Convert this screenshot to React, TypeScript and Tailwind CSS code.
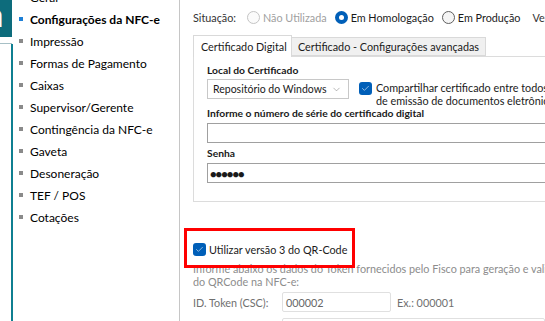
import { Check, ChevronDown } from 'lucide-react';

const menu = [
  'Geral',
  'Configurações da NFC-e',
  'Impressão',
  'Formas de Pagamento',
  'Caixas',
  'Supervisor/Gerente',
  'Contingência da NFC-e',
  'Gaveta',
  'Desoneração',
  'TEF / POS',
  'Cotações',
];

function Radio({ label, state }: { label: string; state: 'off' | 'on' | 'disabled' }) {
  return (
    <div className="flex items-center gap-[3px]">
      {state === 'on' ? (
        <span className="w-[13px] h-[13px] rounded-full bg-[#005fb8] flex items-center justify-center">
          <span className="w-[5px] h-[5px] rounded-full bg-white" />
        </span>
      ) : (
        <span
          className={
            state === 'disabled'
              ? 'w-[13px] h-[13px] rounded-full border border-[#c4c4c4] bg-[#fbfbfb]'
              : 'w-[13px] h-[13px] rounded-full border border-[#5f5f5f] bg-[#f5f5f5]'
          }
        />
      )}
      <span className={state === 'disabled' ? 'text-[#a0a0a0]' : 'text-[#1a1a1a]'}>{label}</span>
    </div>
  );
}

function Checkbox() {
  return (
    <span className="w-[13px] h-[13px] rounded-[3px] bg-[#005fb8] flex items-center justify-center shrink-0">
      <Check size={9} strokeWidth={1.5} color="#ffffff" />
    </span>
  );
}

export default function App() {
  return (
    <div
      className="relative w-[545px] h-[321px] overflow-hidden bg-white flex text-[12px] leading-[15px] text-[#1a1a1a]"
      style={{ fontFamily: 'Lato, "Noto Sans", sans-serif' }}
    >
      {/* logo strip */}
      <div className="w-[13px] flex flex-col shrink-0">
        <div className="h-[37px] w-[12px] bg-[#0d6c7c] overflow-hidden shrink-0">
          <span className="block -ml-[14px] -mt-[6px] text-[34px] leading-[40px] font-bold text-white">a</span>
        </div>
        <div className="h-[6px] shrink-0" />
        <div className="h-px w-[12px] bg-[#a7c0c6] shrink-0" />
        <div className="flex-1 border-r-2 border-[#0f7f91] w-[13px]" />
      </div>

      {/* menu */}
      <div className="w-[167px] shrink-0 border-r border-[#c6c6c6]">
        <ul className="-mt-[14px]">
          {menu.map((item, i) => (
            <li key={item} className="h-[22px] flex items-center pl-[6px] gap-[7px] whitespace-nowrap">
              <span className={i === 1 ? 'w-[4px] h-[4px] bg-[#1d7fd6]' : 'w-[4px] h-[4px] bg-[#8a8a8a]'} />
              <span className={i === 1 ? 'font-bold text-black' : 'text-black'}>{item}</span>
            </li>
          ))}
        </ul>
      </div>

      {/* content */}
      <div className="flex-1 pl-[13px] flex flex-col min-w-0 text-[10.8px] leading-[13px] [&>*]:shrink-0">
        <div className="mt-[7px] h-[20px] flex items-center whitespace-nowrap">
          <span className="text-[#333] mr-[11px]">Situação:</span>
          <div className="flex items-center gap-[8px]">
            <Radio label="Não Utilizada" state="disabled" />
            <Radio label="Em Homologação" state="on" />
            <Radio label="Em Produção" state="off" />
            <span className="ml-[4px] text-[#333]">Versão</span>
          </div>
        </div>

        {/* tabs */}
        <div className="mt-[8px] flex items-end whitespace-nowrap">
          <div className="h-[22px] w-[99px] pl-[7px] border border-b-0 border-[#d9d9d9] bg-white flex items-center relative z-10 -mb-px">
            Certificado Digital
          </div>
          <div className="h-[19px] w-[194px] pl-[6px] border border-l-0 border-[#d9d9d9] bg-[#f0f0f0] flex items-center">
            Certificado - Configurações avançadas
          </div>
        </div>

        {/* panel */}
        <div className="h-[146px] border border-r-0 border-[#dcdcdc] pl-[13px] pt-[6px] flex flex-col whitespace-nowrap">
          <div className="font-bold text-[10.3px] leading-[14px]">Local do Certificado</div>
          <div className="mt-[2px] h-[20px] flex items-start">
            <div className="w-[142px] h-[20px] shrink-0 border border-[#c8c8c8] flex items-center justify-between pl-[5px] pr-[6px] text-[10.5px]">
              <span>Repositório do Windows</span>
              <ChevronDown size={11} strokeWidth={1} color="#666" />
            </div>
            <div className="ml-[10px] mt-[3px] flex items-start gap-[4px]">
              <Checkbox />
              <div className="-mt-[1px] leading-[13px]">
                <div>Compartilhar certificado entre todos os módulos</div>
                <div>de emissão de documentos eletrônicos</div>
              </div>
            </div>
          </div>
          <div className="mt-[7px] font-bold text-[10.3px] leading-[14px]">Informe o número de série do certificado digital</div>
          <div className="mt-[3px] h-[20px] border border-[#a0a0a0] border-r-0" />
          <div className="mt-[3px] font-bold text-[10.3px] leading-[14px]">Senha</div>
          <div className="mt-[3px] h-[20px] border border-[#a0a0a0] border-r-0 flex items-center pl-[2px] text-[11px] tracking-[-1px]">
            ●●●●●●
          </div>
        </div>

        {/* qr code */}
        <div className="mt-[41px] h-[12px] flex items-center gap-[3px] whitespace-nowrap">
          <Checkbox />
          <span>Utilizar versão 3 do QR-Code</span>
        </div>
        <div className="mt-[7px] text-[#8c8c8c] leading-[13px] whitespace-nowrap">
          <div>Informe abaixo os dados do Token fornecidos pelo Fisco para geração e validação</div>
          <div>do QRCode na NFC-e:</div>
        </div>
        <div className="mt-[4px] flex items-center whitespace-nowrap text-[#6f6f6f]">
          <span className="w-[89px]">ID. Token (CSC):</span>
          <div className="w-[109px] h-[20px] border border-[#e0e0e0] rounded-[2px] flex items-center pl-[3px] text-[#666]">000002</div>
          <span className="ml-[6px]">Ex.: 000001</span>
        </div>
        <div className="mt-[6px] ml-[89px] h-[20px] border border-[#e0e0e0] rounded-[2px]" />
      </div>

      {/* highlight */}
      <div className="absolute left-[184px] top-[228px] w-[171px] h-[40px] border-[3px] border-[#ff0000] pointer-events-none" />
    </div>
  );
}
